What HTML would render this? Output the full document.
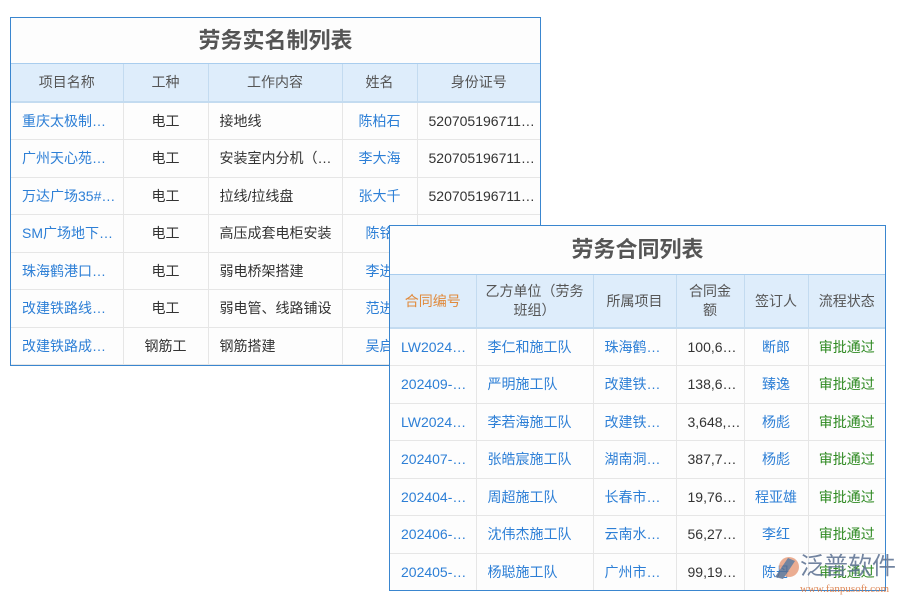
<!DOCTYPE html>
<html><head><meta charset="utf-8"><style>
body{margin:0;width:900px;height:600px;background:#fff;position:relative;overflow:hidden;font-family:"Liberation Sans","Noto Sans CJK SC",sans-serif;font-size:14px;color:#333}
.box{position:absolute;background:#fdfdfd;border:1px solid #3a86cf;box-sizing:border-box;overflow:hidden}
.title{text-align:center;font-weight:bold;color:#555;font-size:22px;border-bottom:1px solid #a9cdee}
table{border-collapse:collapse;table-layout:fixed;width:100%}
th{background:#deedfb;font-weight:normal;color:#555;border-right:1px solid #c3dbf0;border-bottom:2px solid #c3dbf0;padding:0 8px;line-height:19px}
td{border-right:1px solid #e6e6e6;border-bottom:1px solid #e6e6e6;padding:0 3px 0 11px;white-space:nowrap;overflow:hidden;text-overflow:ellipsis}
td.c{padding:0 2px}
th:last-child,td:last-child{border-right:none}
.b{color:#2d7fd6}.c{text-align:center}.g{color:#2f8a22}
</style></head><body>
<div class="box" style="left:10px;top:17px;width:531px;height:349px">
<div class="title" style="height:45px;line-height:45px">劳务实名制列表</div>
<table>
<colgroup><col style="width:112px"><col style="width:85px"><col style="width:134px"><col style="width:75px"><col></colgroup>
<tr style="height:38px"><th>项目名称</th><th>工种</th><th>工作内容</th><th>姓名</th><th>身份证号</th></tr>
<tr style="height:37.5px"><td class="b">重庆太极制药厂</td><td class="c">电工</td><td>接地线</td><td class="b c">陈柏石</td><td>520705196711220011</td></tr>
<tr style="height:37.5px"><td class="b">广州天心苑项目</td><td class="c">电工</td><td>安装室内分机（…</td><td class="b c">李大海</td><td>520705196711220011</td></tr>
<tr style="height:37.5px"><td class="b">万达广场35#楼项目</td><td class="c">电工</td><td>拉线/拉线盘</td><td class="b c">张大千</td><td>520705196711220011</td></tr>
<tr style="height:37.5px"><td class="b">SM广场地下室项目</td><td class="c">电工</td><td>高压成套电柜安装</td><td class="b c">陈铭</td><td></td></tr>
<tr style="height:37.5px"><td class="b">珠海鹤港口项目</td><td class="c">电工</td><td>弱电桥架搭建</td><td class="b c">李进</td><td></td></tr>
<tr style="height:37.5px"><td class="b">改建铁路线项目</td><td class="c">电工</td><td>弱电管、线路铺设</td><td class="b c">范进</td><td></td></tr>
<tr style="height:37.5px"><td class="b">改建铁路成都段</td><td class="c">钢筋工</td><td>钢筋搭建</td><td class="b c">吴启</td><td></td></tr>
</table></div>
<div class="box" style="left:389px;top:225px;width:497px;height:366px">
<div class="title" style="height:48px;line-height:48px">劳务合同列表</div>
<table>
<colgroup><col style="width:86px"><col style="width:117px"><col style="width:83px"><col style="width:68px"><col style="width:64px"><col></colgroup>
<tr style="height:53px"><th style="color:#e08a3c">合同编号</th><th>乙方单位（劳务班组）</th><th>所属项目</th><th>合同金额</th><th>签订人</th><th>流程状态</th></tr>
<tr style="height:37.5px"><td class="b">LW20240901</td><td class="b">李仁和施工队</td><td class="b">珠海鹤港口</td><td>100,600.00</td><td class="b c">断郎</td><td class="g c">审批通过</td></tr>
<tr style="height:37.5px"><td class="b">202409-0001</td><td class="b">严明施工队</td><td class="b">改建铁路线</td><td>138,600.00</td><td class="b c">臻逸</td><td class="g c">审批通过</td></tr>
<tr style="height:37.5px"><td class="b">LW20240801</td><td class="b">李若海施工队</td><td class="b">改建铁路线</td><td>3,648,000</td><td class="b c">杨彪</td><td class="g c">审批通过</td></tr>
<tr style="height:37.5px"><td class="b">202407-0001</td><td class="b">张皓宸施工队</td><td class="b">湖南洞庭湖</td><td>387,700.00</td><td class="b c">杨彪</td><td class="g c">审批通过</td></tr>
<tr style="height:37.5px"><td class="b">202404-0001</td><td class="b">周超施工队</td><td class="b">长春市项目</td><td>19,760.00</td><td class="b c">程亚雄</td><td class="g c">审批通过</td></tr>
<tr style="height:37.5px"><td class="b">202406-0001</td><td class="b">沈伟杰施工队</td><td class="b">云南水电站</td><td>56,270.00</td><td class="b c">李红</td><td class="g c">审批通过</td></tr>
<tr style="height:37.5px"><td class="b">202405-0001</td><td class="b">杨聪施工队</td><td class="b">广州市项目</td><td>99,190.00</td><td class="b c">陈丹</td><td class="g c">审批通过</td></tr>
</table></div>
<div style="position:absolute;left:770px;top:550px;width:130px;height:50px;opacity:.85;white-space:nowrap">
<svg width="30" height="30" style="position:absolute;left:2px;top:4px"><circle cx="17" cy="13" r="10" fill="#e8a080"/><path d="M3 23 L16 4 L23 7 L11 25 Z" fill="#5a6f90"/></svg>
<div style="position:absolute;left:30px;top:0;font-size:24px;line-height:34px;color:#5a6f90">泛普软件</div>
<div style="position:absolute;left:30px;top:33px;font-size:11px;color:#d9743a;font-family:'Liberation Serif',serif">www.fanpusoft.com</div>
</div>
</body></html>
